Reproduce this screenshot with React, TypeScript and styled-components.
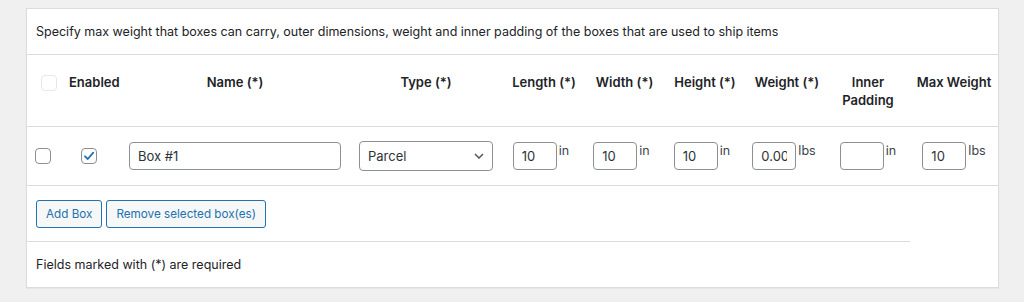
import React from 'react';
import styled, { createGlobalStyle } from 'styled-components';

const GlobalStyle = createGlobalStyle`
  body {
    margin: 0;
    background: #f0f0f1;
    font-family: Inter, "Liberation Sans", Arial, sans-serif;
    font-size: 12.5px;
    color: #1d2327;
  }
`;

const Page = styled.div`
  padding: 8px 25px 13px 26px;
`;

const Panel = styled.div`
  background: #fff;
  border: 1px solid #dcdcde;
  box-shadow: 0 1px 1px rgba(0, 0, 0, 0.04);
`;

const Intro = styled.p`
  margin: 0;
  height: 45px;
  padding: 0 9px;
  display: flex;
  align-items: center;
  border-bottom: 1px solid #dcdcde;
`;

const Table = styled.table`
  width: 100%;
  table-layout: fixed;
  border-collapse: separate;
  border-spacing: 0;
`;

const HeadCell = styled.th<{ $left?: number; $shift?: boolean }>`
  height: 72px;
  box-sizing: border-box;
  padding: 18px 4px 0;
  padding-left: ${p => (p.$left !== undefined ? `${p.$left}px` : p.$shift ? '10px' : '4px')};
  vertical-align: top;
  text-align: ${p => (p.$left !== undefined ? 'left' : 'center')};
  font-size: 13px;
  font-weight: 600;
  line-height: 18px;
  color: #1d2327;
  border-bottom: 1px solid #dcdcde;
`;

const Cell = styled.td`
  height: 58px;
  padding: 0;
  text-align: center;
  vertical-align: middle;
  border-bottom: 1px solid #dcdcde;
`;

const FootCell = styled.td<{ $line?: boolean }>`
  height: 55px;
  padding: 0 9px;
  vertical-align: middle;
  border-bottom: 1px solid ${p => (p.$line ? '#dcdcde' : 'transparent')};
`;

const Box = styled.span<{ $faint?: boolean }>`
  display: inline-flex;
  align-items: center;
  justify-content: center;
  width: 16px;
  height: 16px;
  box-sizing: border-box;
  border: 1px solid ${p => (p.$faint ? '#e6e7e9' : '#8c8f94')};
  border-radius: 4px;
  background: #fff;
  vertical-align: middle;
`;

const Field = styled.span`
  display: inline-flex;
  align-items: flex-start;
  vertical-align: middle;
`;

const TextInput = styled.input<{ $w: number }>`
  width: ${p => p.$w}px;
  height: 28px;
  box-sizing: border-box;
  padding: 0 8px;
  border: 1px solid #8c8f94;
  border-radius: 4px;
  background: #fff;
  font-family: inherit;
  font-size: 13px;
  color: #2c3338;
  outline: none;
`;

const Unit = styled.span`
  margin: 2px 0 0 2px;
  font-size: 12.5px;
  line-height: 13px;
  color: #3c434a;
  text-align: left;
`;

const SelectBox = styled.span`
  display: inline-flex;
  align-items: center;
  justify-content: space-between;
  width: 134px;
  height: 30px;
  box-sizing: border-box;
  padding: 0 8px 0 8px;
  border: 1px solid #8c8f94;
  border-radius: 4px;
  font-size: 13px;
  color: #2c3338;
  vertical-align: middle;
`;

const Button = styled.button`
  height: 28px;
  margin-right: 4px;
  padding: 0 9px;
  border: 1px solid #2271b1;
  border-radius: 3px;
  background: #f6f7f7;
  color: #2271b1;
  font-family: inherit;
  font-size: 11.7px;
  cursor: pointer;
`;

const Footer = styled.p`
  margin: 0;
  height: 45px;
  padding: 0 9px;
  display: flex;
  align-items: center;
`;

const widths = [32, 60, 232, 150, 80, 81, 80, 84, 84, 88];

function Check({ checked, faint }: { checked?: boolean; faint?: boolean }) {
  return (
    <Box $faint={faint}>
      {checked && (
        <svg width="12" height="12" viewBox="0 0 12 12">
          <path d="M2 6.3 L4.8 9 L10.2 2.6" fill="none" stroke="#2271b1" strokeWidth="1.8" strokeLinecap="round" strokeLinejoin="round" />
        </svg>
      )}
    </Box>
  );
}

function Measure({ value, unit }: { value: string; unit: string }) {
  return (
    <Field>
      <TextInput $w={44} defaultValue={value} />
      <Unit>{unit}</Unit>
    </Field>
  );
}

const dims: [string, string][] = [
  ['10', 'in'],
  ['10', 'in'],
  ['10', 'in'],
  ['0.000', 'lbs'],
  ['', 'in'],
  ['10', 'lbs'],
];

export default function App() {
  return (
    <>
      <GlobalStyle />
      <Page>
        <Panel>
          <Intro>
            Specify max weight that boxes can carry, outer dimensions, weight and inner padding of the boxes that are used to ship items
          </Intro>
          <Table>
            <colgroup>
              {widths.map((w, i) => (
                <col key={i} style={{ width: w }} />
              ))}
            </colgroup>
            <thead>
              <tr>
                <HeadCell $left={14}>
                  <Check faint />
                </HeadCell>
                <HeadCell $shift>Enabled</HeadCell>
                <HeadCell>Name (*)</HeadCell>
                <HeadCell>Type (*)</HeadCell>
                <HeadCell $shift>Length (*)</HeadCell>
                <HeadCell $shift>Width (*)</HeadCell>
                <HeadCell $shift>Height (*)</HeadCell>
                <HeadCell $shift>Weight (*)</HeadCell>
                <HeadCell>Inner Padding</HeadCell>
                <HeadCell>Max Weight</HeadCell>
              </tr>
            </thead>
            <tbody>
              <tr>
                <Cell>
                  <Check />
                </Cell>
                <Cell>
                  <Check checked />
                </Cell>
                <Cell>
                  <TextInput $w={212} defaultValue="Box #1" />
                </Cell>
                <Cell>
                  <SelectBox>
                    Parcel
                    <svg width="10" height="6" viewBox="0 0 10 6">
                      <path d="M1 1 L5 5 L9 1" fill="none" stroke="#50575e" strokeWidth="1.5" />
                    </svg>
                  </SelectBox>
                </Cell>
                {dims.map(([v, u], i) => (
                  <Cell key={i}>
                    <Measure value={v} unit={u} />
                  </Cell>
                ))}
              </tr>
            </tbody>
            <tfoot>
              <tr>
                <FootCell colSpan={9} $line>
                  <Button>Add Box</Button>
                  <Button>Remove selected box(es)</Button>
                </FootCell>
                <FootCell />
              </tr>
            </tfoot>
          </Table>
          <Footer>Fields marked with (*) are required</Footer>
        </Panel>
      </Page>
    </>
  );
}
